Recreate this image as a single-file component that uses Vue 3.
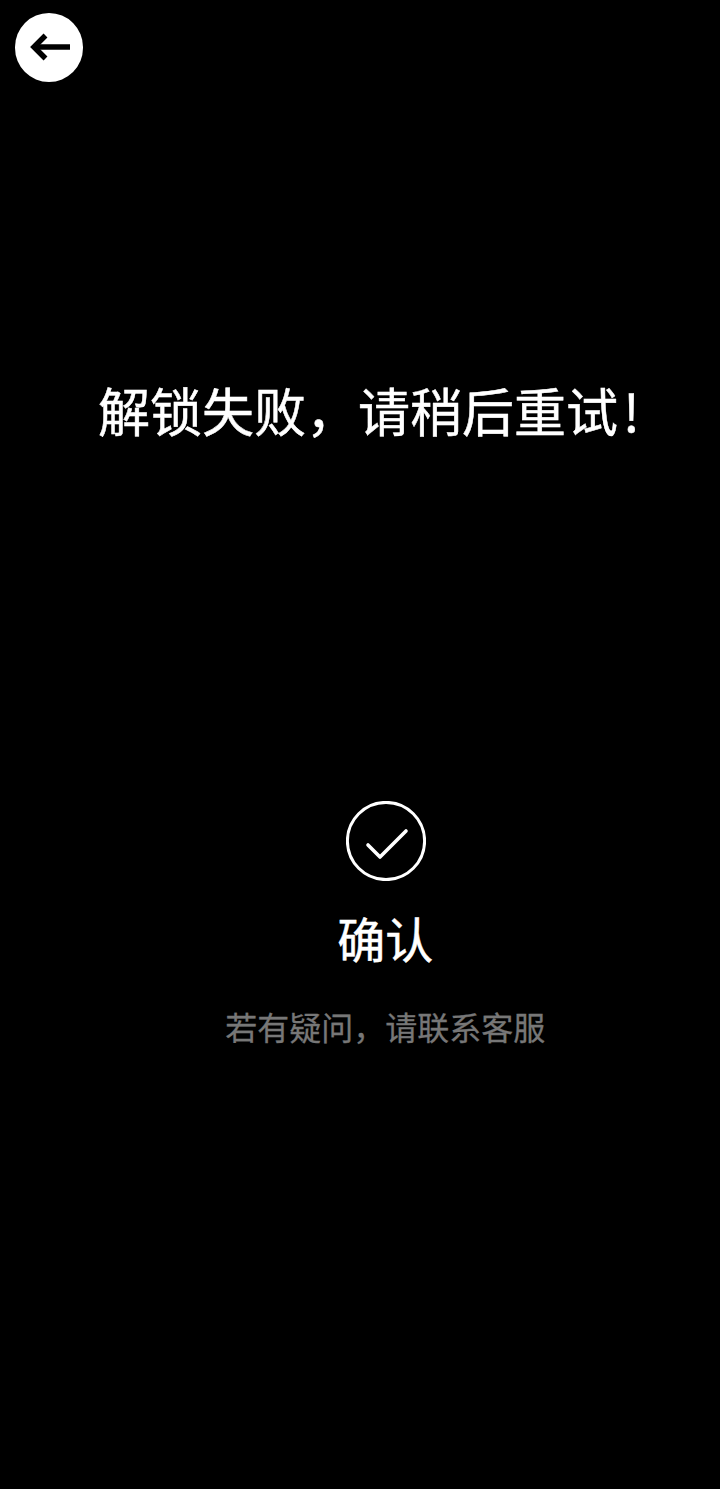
<script setup>
</script>

<template>
  <div class="page">
    <button class="back" aria-label="返回">
      <svg class="arrow" width="42" height="28" viewBox="0 0 42 28" fill="none" stroke="#000" stroke-width="5.5">
        <path d="M41 14H5" />
        <path d="M16.5 2.5 5 14l11.5 11.5" />
      </svg>
    </button>
    <h1 class="title">解锁失败，请稍后重试<span class="bang">!</span></h1>
    <div class="confirm">
      <svg class="check" width="80" height="80" viewBox="0 0 80 80" fill="none" stroke="#fff">
        <circle cx="40" cy="40" r="38.6" stroke-width="3" />
        <path d="M22 44 34 56 60 30" stroke-width="3.6" stroke-linecap="round" stroke-linejoin="round" />
      </svg>
      <div class="confirm-label">确认</div>
      <div class="hint">若有疑问，请联系客服</div>
    </div>
  </div>
</template>

<style>
html, body { margin: 0; background: #000; }
</style>

<style scoped>
.page {
  width: 720px;
  height: 1489px;
  background: #000;
  display: flex;
  flex-direction: column;
  font-family: "Noto Sans CJK SC", "Noto Sans", sans-serif;
  overflow: hidden;
}
.back {
  width: 68.5px;
  height: 68.5px;
  margin: 13px 0 0 14.5px;
  padding: 0 0 1px 2px;
  border: 0;
  border-radius: 50%;
  background: #fff;
  display: flex;
  align-items: center;
  justify-content: center;
  flex-shrink: 0;
}
.title {
  margin: 293.5px 0 0 98px;
  font-size: 52px;
  line-height: 70px;
  font-weight: 400;
  -webkit-text-stroke: 0.5px #fff;
  color: #fff;
  white-space: nowrap;
}
.bang { margin-left: 5px; }
.confirm {
  margin: 356px 0 0 0;
  padding-left: 50.5px;
  display: flex;
  flex-direction: column;
  align-items: center;
}
.check { display: block; margin-left: 1px; }
.confirm-label {
  margin-top: 21px;
  font-size: 48px;
  font-weight: 400;
  -webkit-text-stroke: 0.5px #fff;
  line-height: 70px;
  color: #fff;
}
.hint {
  margin-top: 32px;
  font-size: 32px;
  font-weight: 400;
  -webkit-text-stroke: 0.3px #777;
  line-height: 44px;
  color: #777;
}
</style>
